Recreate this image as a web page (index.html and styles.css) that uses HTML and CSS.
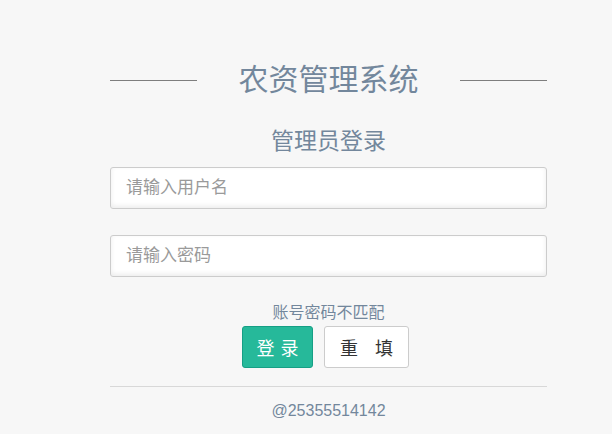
FILE: index.html
```html
<!DOCTYPE html>
<html lang="zh-CN">
<head>
    <meta charset="UTF-8">
    <meta name="viewport" content="width=device-width, initial-scale=1.0">
    <title>农资管理系统</title>
    <link rel="stylesheet" href="styles.css">
</head>
<body>

    <div class="login">
        <h1 class="title">农资管理系统</h1>
        <h2 class="subtitle">管理员登录</h2>

        <form class="login-form" onsubmit="return false;">
            <input type="text" class="form-input" placeholder="请输入用户名">
            <input type="password" class="form-input input-gap" placeholder="请输入密码">

            <p class="error-msg">账号密码不匹配</p>

            <div class="button-row">
                <button type="submit" class="btn btn-login"><span>登</span><span>录</span></button>
                <button type="reset" class="btn btn-reset"><span>重</span><span>填</span></button>
            </div>
        </form>

        <div class="footer">@25355514142</div>
    </div>

</body>
</html>
```

FILE: styles.css
```css
body {
    margin: 0;
    background-color: #f7f7f7;
    color: #73879c;
    font-family: "Liberation Sans", "Noto Sans CJK SC", sans-serif;
}

.login {
    width: 437px;
    margin-left: 110px;
    padding-top: 60px;
}

/* Title with lines on both sides */
.title {
    display: flex;
    align-items: center;
    justify-content: space-between;
    margin: 0;
    height: 40px;
    font-size: 30px;
    font-weight: normal;
    line-height: 40px;
}
.title::before,
.title::after {
    content: "";
    width: 87px;
    height: 1px;
    background-color: #7e7e7e;
}

.subtitle {
    margin: 26px 0 0;
    font-size: 23px;
    font-weight: normal;
    line-height: 30px;
    text-align: center;
}

.login-form {
    margin-top: 11px;
}

.form-input {
    display: block;
    box-sizing: border-box;
    width: 100%;
    height: 42px;
    margin: 0;
    padding: 0 15px;
    border: 1px solid #cccccc;
    border-radius: 3px;
    background-color: #fff;
    box-shadow: 0 -2px 5px rgba(0, 0, 0, 0.08) inset;
    font-family: inherit;
    font-size: 17px;
    color: #555;
}
.form-input::placeholder {
    color: #9a9a9a;
}
.input-gap {
    margin-top: 26px;
}

.error-msg {
    margin: 26px 0 0;
    font-size: 16px;
    line-height: 20px;
    text-align: center;
}

/* Buttons */
.button-row {
    display: flex;
    justify-content: center;
    gap: 11px;
    margin-top: 3px;
    padding-right: 6px;
}
.btn {
    display: flex;
    align-items: center;
    justify-content: center;
    box-sizing: border-box;
    height: 42px;
    padding: 0;
    border-radius: 3px;
    font-family: inherit;
    font-size: 18px;
    white-space: nowrap;
    cursor: pointer;
}
.btn-login {
    width: 71px;
    gap: 6px;
    background-color: #26b99a;
    border: 1px solid #169f85;
    color: #fff;
}
.btn-reset {
    width: 85px;
    gap: 17px;
    background-color: #fff;
    border: 1px solid #cccccc;
    color: #333;
}

.footer {
    margin-top: 18px;
    padding-top: 14px;
    border-top: 1px solid #d8d8d8;
    font-size: 16px;
    line-height: 20px;
    text-align: center;
}
```
